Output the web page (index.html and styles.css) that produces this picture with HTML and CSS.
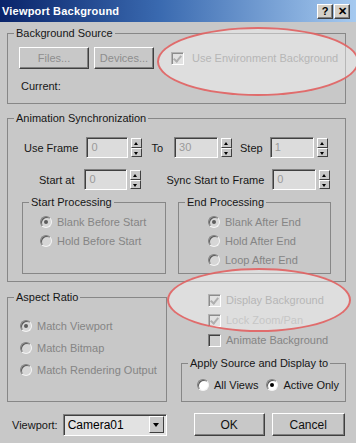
FILE: index.html
```html
<!DOCTYPE html>
<html lang="en">

<head>
    <meta charset="UTF-8">
    <title>Viewport Background</title>
    <link rel="stylesheet" href="styles.css">
</head>

<body>
    <div class="window">
        <div class="titlebar">
            <span class="title">Viewport Background</span>
            <div class="title-btns">
                <span class="tbtn">?</span>
                <span class="tbtn">&#x2715;</span>
            </div>
        </div>

        <div class="content">
            <!-- background source -->
            <fieldset class="group">
                <legend>Background Source</legend>
                <div class="inner src">
                    <div class="src-row">
                        <button class="btn dis files">Files...</button>
                        <button class="btn dis devices">Devices...</button>
                        <span class="check dis env"><i class="box on"></i>Use Environment Background</span>
                    </div>
                    <div class="current">Current:</div>
                </div>
            </fieldset>

            <!-- animation sync -->
            <fieldset class="group sync">
                <legend>Animation Synchronization</legend>
                <div class="inner anim">
                    <div class="spin-row r1">
                        <span class="lbl">Use Frame</span>
                        <div class="spin w42"><span class="field">0</span><span class="arrows"><i class="up"></i><i class="dn"></i></span></div>
                        <span class="lbl to">To</span>
                        <div class="spin w44"><span class="field">30</span><span class="arrows"><i class="up"></i><i class="dn"></i></span></div>
                        <span class="lbl step">Step</span>
                        <div class="spin w44"><span class="field">1</span><span class="arrows"><i class="up"></i><i class="dn"></i></span></div>
                    </div>
                    <div class="spin-row r2">
                        <span class="lbl">Start at</span>
                        <div class="spin w43"><span class="field">0</span><span class="arrows"><i class="up"></i><i class="dn"></i></span></div>
                        <span class="lbl sync-lbl">Sync Start to Frame</span>
                        <div class="spin w44"><span class="field">0</span><span class="arrows"><i class="up"></i><i class="dn"></i></span></div>
                    </div>
                    <div class="subs">
                        <fieldset class="group sub start">
                            <legend>Start Processing</legend>
                            <div class="inner radios">
                                <span class="radio dis"><i class="dot on"></i>Blank Before Start</span>
                                <span class="radio dis"><i class="dot"></i>Hold Before Start</span>
                            </div>
                        </fieldset>
                        <fieldset class="group sub end">
                            <legend>End Processing</legend>
                            <div class="inner radios">
                                <span class="radio dis"><i class="dot on"></i>Blank After End</span>
                                <span class="radio dis"><i class="dot"></i>Hold After End</span>
                                <span class="radio dis"><i class="dot"></i>Loop After End</span>
                            </div>
                        </fieldset>
                    </div>
                </div>
            </fieldset>

            <div class="split">
                <fieldset class="group aspect">
                    <legend>Aspect Ratio</legend>
                    <div class="inner aspect-list">
                        <span class="radio dis"><i class="dot on"></i>Match Viewport</span>
                        <span class="radio dis"><i class="dot"></i>Match Bitmap</span>
                        <span class="radio dis"><i class="dot"></i>Match Rendering Output</span>
                    </div>
                </fieldset>

                <div class="right-col">
                    <div class="checks">
                        <span class="check dis"><i class="box on"></i>Display Background</span>
                        <span class="check dis faint"><i class="box on"></i>Lock Zoom/Pan</span>
                        <span class="check dis"><i class="box"></i>Animate Background</span>
                    </div>
                    <fieldset class="group apply">
                        <legend>Apply Source and Display to</legend>
                        <div class="inner apply-row">
                            <span class="radio"><i class="dot"></i>All Views</span>
                            <span class="radio active"><i class="dot on"></i>Active Only</span>
                        </div>
                    </fieldset>
                </div>
            </div>

            <div class="footer">
                <span class="vp-lbl">Viewport:</span>
                <div class="combo"><span>Camera01</span><i class="drop"></i></div>
                <button class="btn ok">OK</button>
                <button class="btn cancel">Cancel</button>
            </div>
        </div>

        <!-- red highlight marks -->
        <div class="mark m1"></div>
        <div class="mark m2"></div>
    </div>
</body>

</html>
```

FILE: styles.css
```css
* {
    margin: 0;
    padding: 0;
    box-sizing: border-box;
}

body {
    font: 11px "Liberation Sans", Arial, sans-serif;
    color: #161616;
    background: #c8c8c8;
}

.window {
    width: 356px;
    height: 443px;
    background-color: #c8c8c8;
    position: relative;
    overflow: hidden;
}

.titlebar {
    height: 22px;
    background: linear-gradient(90deg, #0a246a 0%, #3a6ab0 45%, #a6caf0 100%);
    display: flex;
    align-items: center;
    justify-content: space-between;
    padding: 0 6px 0 2px;
}

.title {
    color: #fff;
    font-weight: bold;
    font-size: 11px;
    letter-spacing: .2px;
}

.title-btns {
    display: flex;
    gap: 1px;
    margin-top: 1px;
}

.tbtn {
    width: 16px;
    height: 15px;
    background: #d4d0c8;
    border: 1px solid;
    border-color: #fff #404040 #404040 #fff;
    box-shadow: inset -1px -1px #808080;
    font: bold 11px "Liberation Sans", sans-serif;
    color: #000;
    display: flex;
    align-items: center;
    justify-content: center;
    line-height: 1;
}

.content {
    padding: 4px 10px 0 7px;
}

/* group boxes */
.group {
    border: 1px solid #878787;
    padding: 0;
    margin: 0;
    min-width: 0;
}

.group legend {
    margin-left: 6px;
    padding: 0 2px;
    line-height: 14px;
    font-size: 11px;
}

.sync {
    margin-top: 7px;
}

/* background source */
.src {
    height: 63px;
    padding-top: 7px;
}

.src-row {
    display: flex;
    align-items: center;
    height: 22px;
}

.btn {
    font: 11px "Liberation Sans", Arial, sans-serif;
    color: #111;
    background: #c8c8c8;
    border: 1px solid;
    border-color: #fff #404040 #404040 #fff;
    box-shadow: inset -1px -1px #808080;
    height: 22px;
}

.btn.dis {
    color: #8e8e8e;
}

.files {
    width: 70px;
    margin-left: 11px;
}

.devices {
    width: 60px;
    margin-left: 5px;
}

.env {
    margin-left: 17px;
}

.current {
    margin: 10px 0 0 13px;
    line-height: 14px;
}

/* checkboxes & radios */
.check,
.radio {
    display: flex;
    align-items: center;
    white-space: nowrap;
}

.dis {
    color: #858585;
}

.faint {
    color: #a0a0a0;
}

.box {
    width: 13px;
    height: 13px;
    border: 1px solid;
    border-color: #808080 #fff #fff #808080;
    box-shadow: inset 1px 1px #404040;
    background: #cfcfcf;
    margin-right: 8px;
    position: relative;
}

.box.on::after {
    content: '';
    position: absolute;
    left: 3px;
    top: 1px;
    width: 3px;
    height: 6px;
    border: solid #7a7a7a;
    border-width: 0 2px 2px 0;
    transform: rotate(40deg);
}

.dot {
    width: 12px;
    height: 12px;
    border-radius: 50%;
    border: 1px solid;
    border-color: #808080 #f4f4f4 #f4f4f4 #808080;
    box-shadow: inset 1px 1px #5a5a5a;
    background: #d6d6d6;
    margin-right: 5px;
    position: relative;
}

.dot.on::after {
    content: '';
    position: absolute;
    left: 3px;
    top: 3px;
    width: 4px;
    height: 4px;
    border-radius: 50%;
    background: #5c5c5c;
}

.radio.active .dot,
.apply-row .dot {
    background: #fff;
}

.radio.active .dot.on::after {
    background: #000;
}

/* spinners */
.anim {
    height: 156px;
    padding-top: 12px;
}

.spin-row {
    display: flex;
    align-items: center;
    height: 21px;
}

.r1 {
    padding-left: 16px;
}

.r2 {
    margin-top: 11px;
    padding-left: 31px;
}

.r1 .spin:first-of-type {
    margin-left: 8px;
}

.r2 .spin:first-of-type {
    margin-left: 10px;
}

.to {
    margin: 0 11px 0 9px;
}

.step {
    margin: 0 7px 0 8px;
}

.sync-lbl {
    margin: 0 8px 0 25px;
}

.spin {
    display: flex;
    align-items: center;
    gap: 3px;
}

.field {
    height: 21px;
    border: 1px solid;
    border-color: #808080 #fff #fff #808080;
    box-shadow: inset 1px 1px #404040;
    background: #dcdcdc;
    color: #9a9a9a;
    padding: 2px 0 0 4px;
    line-height: 15px;
}

.w42 .field { width: 42px; }
.w43 .field { width: 43px; }
.w44 .field { width: 44px; }

.arrows {
    width: 11px;
    height: 19px;
    display: flex;
    flex-direction: column;
}

.arrows i {
    flex: 1;
    border: 1px solid;
    border-color: #fff #404040 #404040 #fff;
    background: #c8c8c8;
    position: relative;
}

.arrows i::after {
    content: '';
    position: absolute;
    left: 2px;
    top: 3px;
    border-left: 2.5px solid transparent;
    border-right: 2.5px solid transparent;
}

.arrows .up::after {
    border-bottom: 3px solid #000;
}

.arrows .dn::after {
    top: 3px;
    border-top: 3px solid #000;
}

/* start / end processing */
.subs {
    display: flex;
    gap: 12px;
    margin: 5px 14px 0;
}

.sub.start {
    width: 144px;
}

.sub.end {
    width: 153px;
}

.radios {
    height: 64px;
    padding-top: 3px;
}

.radios .radio {
    height: 19px;
}

.start .radio {
    padding-left: 17px;
}

.end .radio {
    padding-left: 29px;
}

/* lower half */
.split {
    display: flex;
    gap: 14px;
    margin-top: 8px;
}

.aspect {
    width: 160px;
}

.aspect-list {
    height: 97px;
    padding: 11px 0 0 12px;
}

.aspect-list .radio {
    height: 22px;
}

.right-col {
    flex: 1;
}

.checks {
    padding-left: 27px;
}

.checks .check {
    height: 20px;
}

.checks .box {
    margin-right: 5px;
}

.apply {
    margin-top: 6px;
}

.apply-row {
    height: 31px;
    display: flex;
    align-items: center;
    padding: 0 0 1px 15px;
}

.apply-row .active {
    margin-left: 8px;
}

/* footer */
.footer {
    display: flex;
    align-items: center;
    margin-top: 11px;
    height: 23px;
    padding-left: 5px;
}

.combo {
    width: 104px;
    height: 22px;
    margin-left: 5px;
    border: 1px solid;
    border-color: #808080 #fff #fff #808080;
    box-shadow: inset 1px 1px #404040;
    background: #e2e2e2;
    display: flex;
    align-items: center;
    justify-content: space-between;
    padding: 0 2px 0 4px;
    color: #000;
    font-size: 12px;
}

.drop {
    width: 15px;
    height: 17px;
    border: 1px solid;
    border-color: #fff #404040 #404040 #fff;
    background: #c8c8c8;
    position: relative;
}

.drop::after {
    content: '';
    position: absolute;
    left: 3px;
    top: 6px;
    border-left: 3.5px solid transparent;
    border-right: 3.5px solid transparent;
    border-top: 4px solid #000;
}

.ok {
    width: 71px;
    height: 23px;
    margin-left: 27px;
    font-size: 12px;
}

.cancel {
    width: 73px;
    height: 23px;
    margin-left: 7px;
    font-size: 12px;
}

/* highlight ovals drawn over the dialog */
.mark {
    position: absolute;
    border: 2px solid rgba(224, 88, 88, .85);
    background: rgba(255, 255, 255, .4);
    border-radius: 50%;
}

.m1 {
    left: 157px;
    top: 27px;
    width: 202px;
    height: 69px;
}

.m2 {
    left: 167px;
    top: 268px;
    width: 184px;
    height: 64px;
}
```
